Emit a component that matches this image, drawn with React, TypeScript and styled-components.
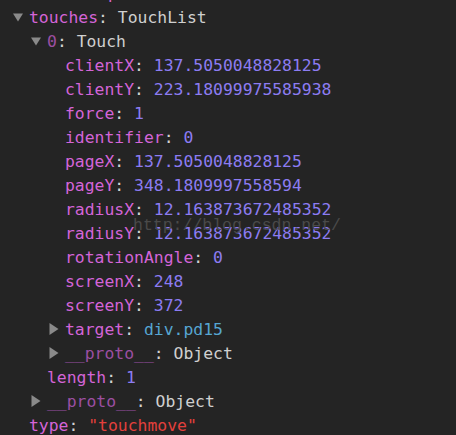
import React from "react";
import styled, { createGlobalStyle } from "styled-components";

const Global = createGlobalStyle`
  html, body { margin: 0; padding: 0; background: #242424; }
  body { width: 456px; height: 435px; overflow: hidden; }
`;

const Page = styled.div`
  position: relative;
  width: 456px;
  height: 435px;
  overflow: hidden;
  background: #242424;
  font-family: "DejaVu Sans Mono", "Liberation Mono", monospace;
  font-size: 16.4px;
`;

const Tree = styled.div`
  display: flex;
  flex-direction: column;
  margin-top: -19px;
`;

const Row = styled.div<{ $depth: number }>`
  display: flex;
  align-items: center;
  height: 24px;
  padding-left: ${(p) => 13 + p.$depth * 18}px;
  white-space: pre;
`;

const ArrowBox = styled.span`
  display: inline-flex;
  align-items: center;
  justify-content: flex-start;
  width: 16px;
  height: 100%;
  flex: none;
`;

const Key = styled.span<{ $dim?: boolean }>`
  color: ${(p) => (p.$dim ? "#9c4fa2" : "#d464d8")};
`;

const Colon = styled.span`
  color: #d2d2d2;
`;

const Value = styled.span<{ $kind: "num" | "obj" | "str" | "node" }>`
  color: ${(p) =>
    p.$kind === "num"
      ? "#8c7cf2"
      : p.$kind === "str"
      ? "#e3403c"
      : p.$kind === "node"
      ? "#56a6d2"
      : "#d0d0d0"};
`;

const Watermark = styled.div`
  position: absolute;
  left: 133px;
  top: 216px;
  font-family: "Liberation Mono", monospace;
  font-size: 16.5px;
  color: #4a4a4a;
  pointer-events: none;
`;

type Kind = "num" | "obj" | "str" | "node";
type Item = {
  depth: number;
  arrow?: "open" | "closed";
  k: string;
  dim?: boolean;
  v: string;
  kind: Kind;
};

const items: Item[] = [
  { depth: 0, k: "timeStamp", v: "1476254829145", kind: "num" },
  { depth: 0, arrow: "open", k: "touches", v: "TouchList", kind: "obj" },
  { depth: 1, arrow: "open", k: "0", dim: true, v: "Touch", kind: "obj" },
  { depth: 2, k: "clientX", v: "137.5050048828125", kind: "num" },
  { depth: 2, k: "clientY", v: "223.18099975585938", kind: "num" },
  { depth: 2, k: "force", v: "1", kind: "num" },
  { depth: 2, k: "identifier", v: "0", kind: "num" },
  { depth: 2, k: "pageX", v: "137.5050048828125", kind: "num" },
  { depth: 2, k: "pageY", v: "348.1809997558594", kind: "num" },
  { depth: 2, k: "radiusX", v: "12.163873672485352", kind: "num" },
  { depth: 2, k: "radiusY", v: "12.163873672485352", kind: "num" },
  { depth: 2, k: "rotationAngle", v: "0", kind: "num" },
  { depth: 2, k: "screenX", v: "248", kind: "num" },
  { depth: 2, k: "screenY", v: "372", kind: "num" },
  { depth: 2, arrow: "closed", k: "target", v: "div.pd15", kind: "node" },
  { depth: 2, arrow: "closed", k: "__proto__", dim: true, v: "Object", kind: "obj" },
  { depth: 1, k: "length", v: "1", kind: "num" },
  { depth: 1, arrow: "closed", k: "__proto__", dim: true, v: "Object", kind: "obj" },
  { depth: 0, k: "type", v: '"touchmove"', kind: "str" },
];

const Arrow = ({ open }: { open?: boolean }) => (
  <ArrowBox>
    {open === undefined ? null : open ? (
      <svg width="10" height="9" viewBox="0 0 10 9">
        <polygon points="0,0.5 10,0.5 5,8.5" fill="#8a8a8a" />
      </svg>
    ) : (
      <svg width="10" height="12" viewBox="0 0 10 12">
        <polygon points="0.5,0 9.5,6 0.5,12" fill="#8a8a8a" />
      </svg>
    )}
  </ArrowBox>
);

export default function App() {
  return (
    <Page>
      <Global />
      <Tree>
        {items.map((it, i) => (
          <Row key={i} $depth={it.depth}>
            <Arrow open={it.arrow ? it.arrow === "open" : undefined} />
            <Key $dim={it.dim}>{it.k}</Key>
            <Colon>: </Colon>
            <Value $kind={it.kind}>{it.v}</Value>
          </Row>
        ))}
      </Tree>
      <Watermark>http://blog.csdn.net/</Watermark>
    </Page>
  );
}
